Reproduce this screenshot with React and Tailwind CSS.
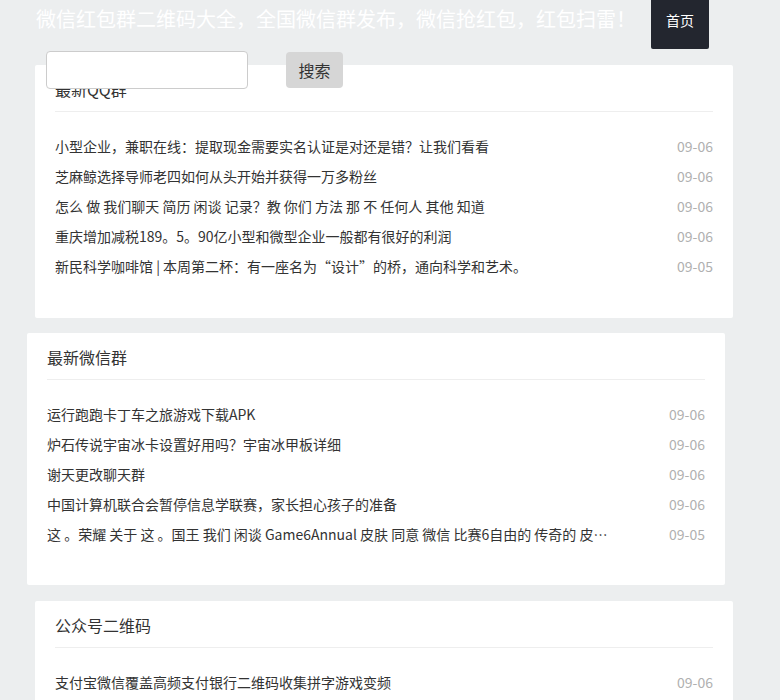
import React from "react";

const groups = [
  {
    title: "最新QQ群",
    box: "ml-[35px] pb-[37px]",
    items: [
      ["小型企业，兼职在线：提取现金需要实名认证是对还是错？让我们看看", "09-06"],
      ["芝麻鲸选择导师老四如何从头开始并获得一万多粉丝", "09-06"],
      ["怎么 做 我们聊天 简历 闲谈 记录？教 你们 方法 那 不 任何人 其他 知道", "09-06"],
      ["重庆增加减税189。5。90亿小型和微型企业一般都有很好的利润", "09-06"],
      ["新民科学咖啡馆 | 本周第二杯：有一座名为“设计”的桥，通向科学和艺术。", "09-05"],
    ],
  },
  {
    title: "最新微信群",
    box: "ml-[27px] mt-[15px] pb-[36px]",
    items: [
      ["运行跑跑卡丁车之旅游戏下载APK", "09-06"],
      ["炉石传说宇宙冰卡设置好用吗？宇宙冰甲板详细", "09-06"],
      ["谢天更改聊天群", "09-06"],
      ["中国计算机联合会暂停信息学联赛，家长担心孩子的准备", "09-06"],
      ["这 。荣耀 关于 这 。国王 我们 闲谈 Game6Annual 皮肤 同意 微信 比赛6自由的 传奇的 皮肤 活动 开始", "09-05"],
    ],
  },
  {
    title: "公众号二维码",
    box: "ml-[35px] mt-[16px] pb-[36px]",
    items: [
      ["支付宝微信覆盖高频支付银行二维码收集拼字游戏变频", "09-06"],
      ["微信公众号二维码生成与推广方法全解析", "09-06"],
    ],
  },
];

function Card({ group }) {
  return (
    <section className={`${group.box} w-[698px] bg-white rounded-[2px] px-5`}>
      <h2 className="pt-[13px] pb-[11px] h-[47px] border-b border-[#eeeeee] text-[16px] leading-[22px] text-[#333]">
        {group.title}
      </h2>
      <ul className="pt-[19px]">
        {group.items.map(([text, date], i) => (
          <li key={i} className="flex items-center justify-between h-[30px] text-[14px]">
            <a className="w-[568px] truncate text-[#333]">{text}</a>
            <span className="text-[#b0b0b0]">{date}</span>
          </li>
        ))}
      </ul>
    </section>
  );
}

export default function App() {
  return (
    <div
      className="min-h-[700px] bg-[#eceeef] overflow-hidden"
      style={{ fontFamily: '"Noto Sans CJK SC", "Noto Sans", sans-serif' }}
    >
      <header className="flex items-start h-[51px]">
        <h1 className="ml-[36px] mt-[6px] text-[20px] leading-[26px] text-white whitespace-nowrap">
          微信红包群二维码大全，全国微信群发布，微信抢红包，红包扫雷！
        </h1>
        <nav className="ml-auto mr-[71px]">
          <a className="flex items-center justify-center w-[58px] h-[49px] pb-[8px] bg-[#23262f] text-white text-[14px] rounded-b-[2px]">
            首页
          </a>
        </nav>
      </header>

      <form className="relative z-10 flex items-start pl-[46px] h-[37px] -mb-[23px]">
        <input
          type="text"
          className="w-[202px] h-[38px] bg-white border border-[#cccccc] rounded-[4px] outline-none px-2"
        />
        <button
          type="button"
          className="ml-[38px] mt-[1px] w-[57px] h-[36px] bg-[#d6d6d6] rounded-[4px] text-[16px] text-[#333]"
        >
          搜索
        </button>
      </form>

      <main className="flex flex-col">
        {groups.map((g) => (
          <Card key={g.title} group={g} />
        ))}
      </main>
    </div>
  );
}
